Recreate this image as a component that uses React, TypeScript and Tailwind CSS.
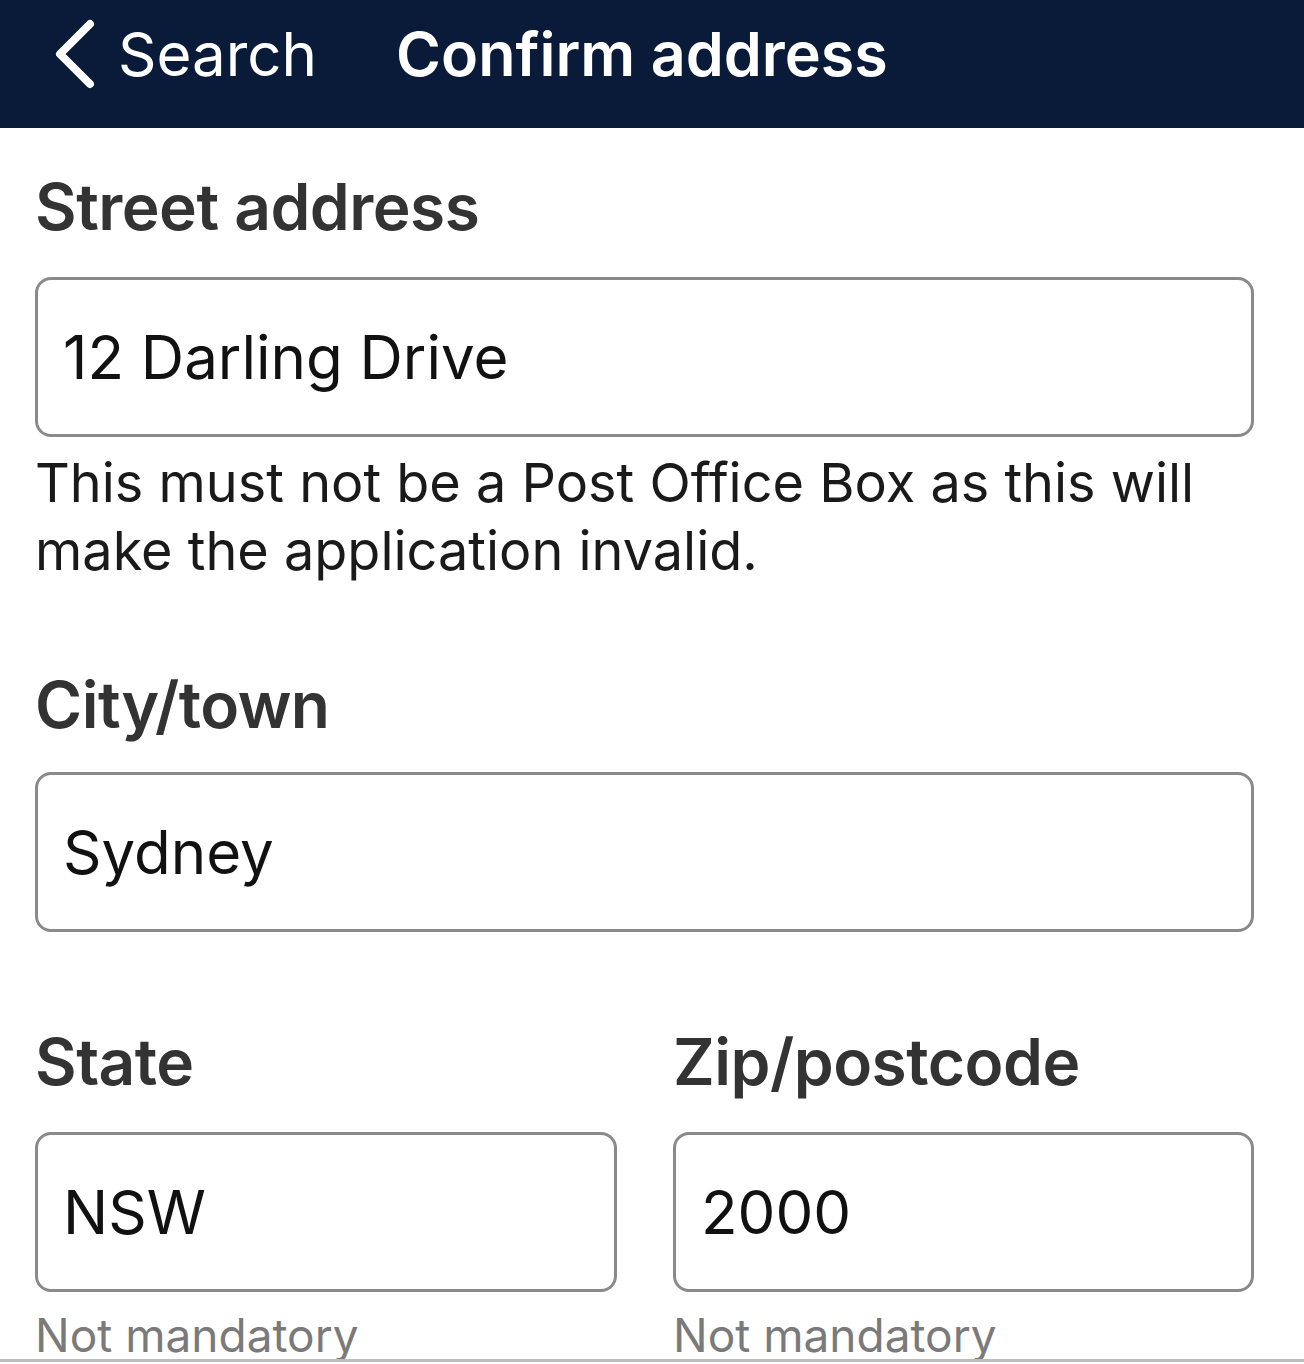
function Field({ value, className = "" }: { value: string; className?: string }) {
  return (
    <div
      className={`h-[160px] rounded-[16px] border-[3px] border-[#8a8a8a] bg-white flex items-center px-[25px] text-[60px] text-[#111] ${className}`}
    >
      {value}
    </div>
  );
}

function Label({ children }: { children: string }) {
  return <div className="text-[64px] font-semibold text-[#333] leading-none tracking-[-0.5px]">{children}</div>;
}

export default function App() {
  return (
    <div
      className="w-[1304px] h-[1364px] bg-white flex flex-col overflow-hidden"
      style={{ fontFamily: "Inter, 'Noto Sans', sans-serif" }}
    >
      <header className="h-[128px] shrink-0 bg-[#0a1b39] flex items-center pb-[20px] text-white">
        <div className="flex items-center pl-[52px]">
          <svg width="46" height="70" viewBox="0 0 46 70" fill="none">
            <path d="M38 5 L8 35 L38 65" stroke="white" strokeWidth="8" strokeLinecap="round" strokeLinejoin="round" />
          </svg>
          <span className="ml-[20px] text-[60px] leading-none">Search</span>
        </div>
        <h1 className="ml-[79px] text-[61px] font-semibold leading-none">Confirm address</h1>
      </header>

      <main className="flex-1 overflow-hidden px-[35px]">
        <div className="pt-[47px]">
          <Label>Street address</Label>
        </div>
        <Field value="12 Darling Drive" className="mt-[38px] w-[1219px]" />
        <p className="mt-[12px] text-[54px] leading-[68px] text-[#1a1a1a] pr-[60px]">
          This must not be a Post Office Box as this will make the application invalid.
        </p>

        <div className="mt-[88px]">
          <Label>City/town</Label>
        </div>
        <Field value="Sydney" className="mt-[35px] w-[1219px]" />

        <div className="mt-[98px] grid grid-cols-[582px_581px] gap-x-[56px]">
          <Label>State</Label>
          <Label>Zip/postcode</Label>
          <Field value="NSW" className="mt-[38px]" />
          <Field value="2000" className="mt-[38px]" />
          <div className="mt-[20px] text-[46px] leading-none text-[#7a7a7a]">Not mandatory</div>
          <div className="mt-[20px] text-[46px] leading-none text-[#7a7a7a]">Not mandatory</div>
        </div>
      </main>
      <div className="h-[3px] shrink-0 bg-[#bdbdbd]" />
      <div className="h-[2px] shrink-0 bg-white" />
    </div>
  );
}
